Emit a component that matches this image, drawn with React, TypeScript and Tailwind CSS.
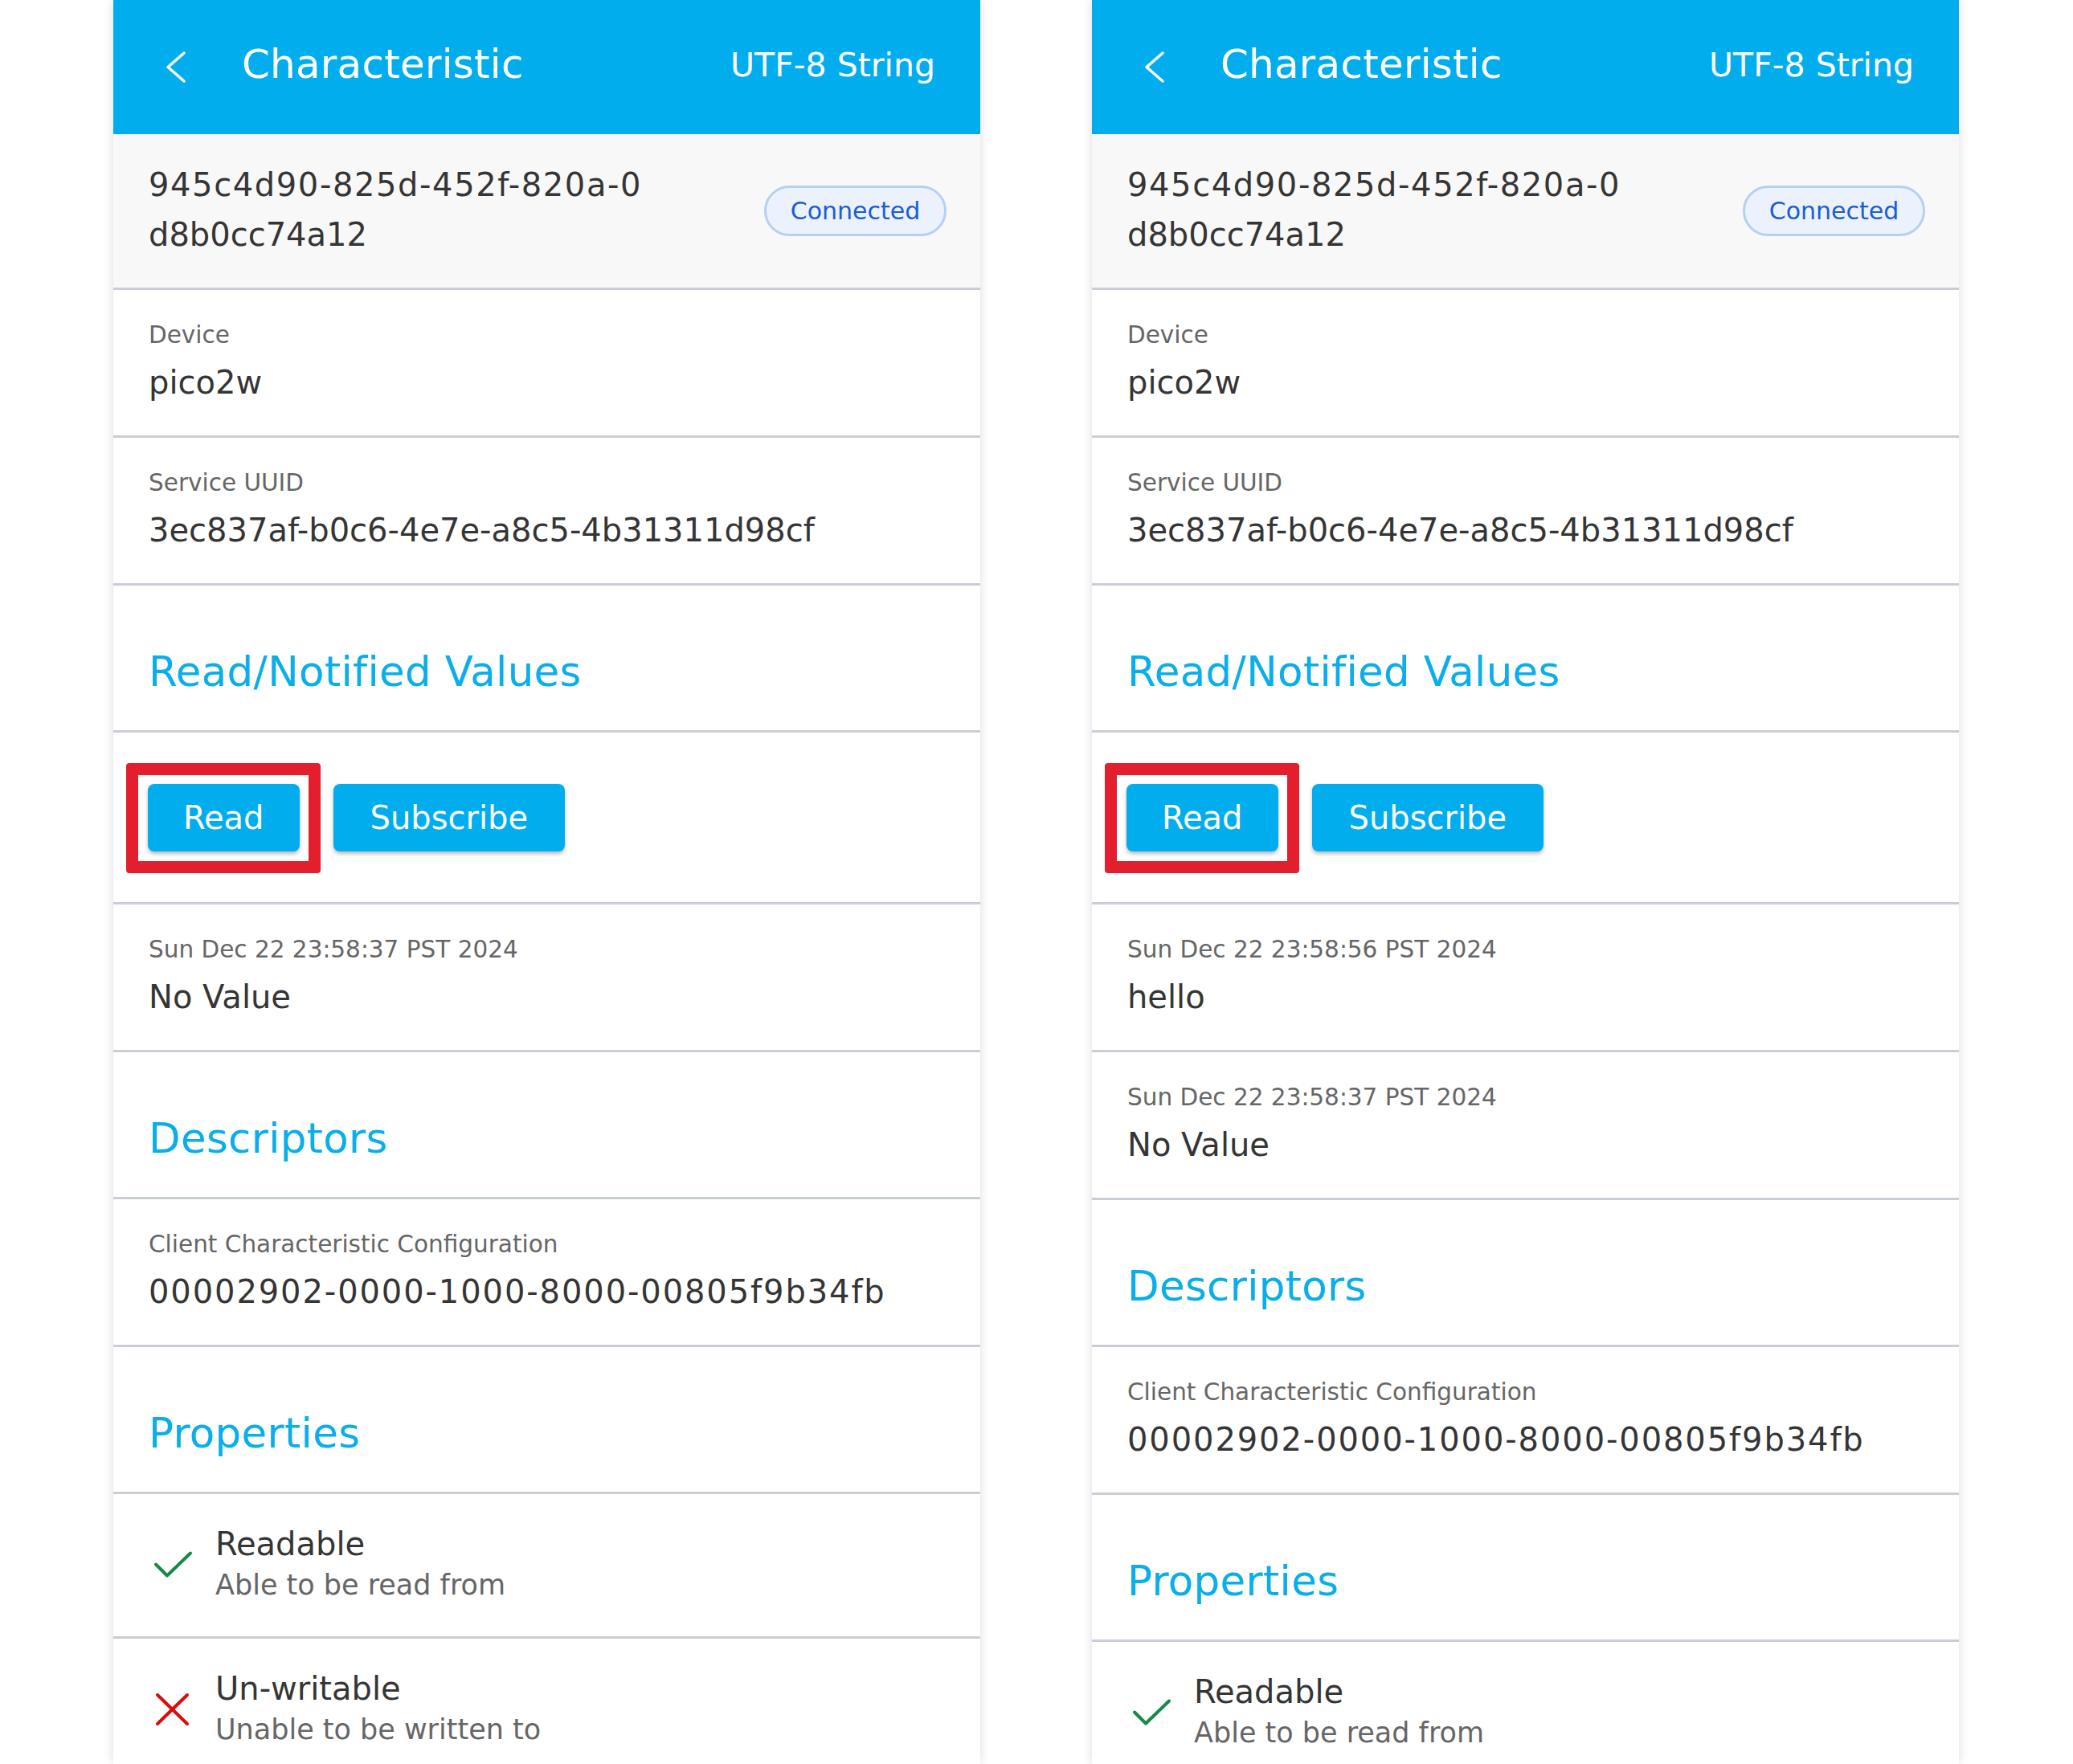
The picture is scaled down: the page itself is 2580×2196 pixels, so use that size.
import React from "react";

const FONT = { fontFamily: '"DejaVu Sans", "Noto Sans", sans-serif' };

function Header() {
  return (
    <div className="flex h-[167px] items-center bg-[#02adee] pl-[66px] pr-[56px] text-white">
      <svg width="24" height="42" viewBox="0 0 24 42" className="shrink-0">
        <polyline points="22,3 2,20.5 22,38" fill="none" stroke="#ffffff" strokeWidth="3.5" strokeLinecap="round" strokeLinejoin="round" />
      </svg>
      <span className="ml-[70px] mb-[8px] text-[50px] leading-[58px] tracking-[0.2px]">Characteristic</span>
      <div className="flex-1" />
      <span className="mb-[5px] text-[41px] leading-[48px]">UTF-8 String</span>
    </div>
  );
}

function IdSection() {
  return (
    <div className="flex h-[191px] items-center justify-between border-b-[3px] border-[#c9ced6] bg-[#f8f8f8] pl-[44px] pr-[42px] box-content">
      <div className="pb-[4px] text-[40px] leading-[62px] text-[#353535]">
        <span className="block tracking-[1.6px]">945c4d90-825d-452f-820a-0</span>
        <span className="block">d8b0cc74a12</span>
      </div>
      <div className="flex h-[63px] w-[227px] items-center justify-center rounded-full border-[3px] border-[#b6cff4] bg-[#ebf2fd] text-[30px] leading-[36px] text-[#1a5dd6]">
        Connected
      </div>
    </div>
  );
}

function Field({ label, value, valueClass = "" }: { label: string; value: string; valueClass?: string }) {
  return (
    <div className="box-content flex h-[181px] flex-col justify-center border-b-[3px] border-[#c9ced6] pl-[44px]">
      <div className="pb-[3px]">
        <div className="text-[29.5px] leading-[36px] text-[#666666]">{label}</div>
        <div className={"mt-[16px] text-[40px] leading-[50px] text-[#353535] " + valueClass}>{value}</div>
      </div>
    </div>
  );
}

function SectionTitle({ title }: { title: string }) {
  return (
    <div className="box-content flex h-[180px] items-end border-b-[3px] border-[#c9ced6] pl-[44px]">
      <div className="mb-[43px] text-[51.5px] leading-[60px] tracking-[0.3px] text-[#0aaeea]">{title}</div>
    </div>
  );
}

function Buttons() {
  return (
    <div className="box-content flex h-[211px] items-center gap-[42px] border-b-[3px] border-[#c9ced6] pl-[43px]">
      <div className="relative">
        <div className="flex h-[84px] items-center justify-center rounded-[8px] bg-[#02adee] px-[44px] text-[40px] leading-[48px] text-white shadow-[0_3px_5px_rgba(0,0,0,0.28)]">
          Read
        </div>
        <div className="pointer-events-none absolute left-[-27px] top-[-26px] h-[137px] w-[242px] rounded-[4px] border-[15px] border-[#e31e2d]" />
      </div>
      <div className="flex h-[84px] items-center justify-center rounded-[8px] bg-[#02adee] px-[46px] text-[40px] leading-[48px] text-white shadow-[0_3px_5px_rgba(0,0,0,0.28)]">
        Subscribe
      </div>
    </div>
  );
}

function Check() {
  return (
    <svg width="50" height="44" viewBox="0 0 50 44" className="shrink-0">
      <polyline points="4,20.5 18,34.5 47,6.5" fill="none" stroke="#148b45" strokeWidth="4" strokeLinecap="round" strokeLinejoin="round" />
    </svg>
  );
}

function Cross() {
  return (
    <svg width="50" height="44" viewBox="0 0 50 44" className="shrink-0">
      <line x1="6" y1="3" x2="43" y2="39" stroke="#dc0a0a" strokeWidth="4" strokeLinecap="round" />
      <line x1="43" y1="3" x2="6" y2="39" stroke="#dc0a0a" strokeWidth="4" strokeLinecap="round" />
    </svg>
  );
}

function Property({ ok, title, sub }: { ok: boolean; title: string; sub: string }) {
  return (
    <div className="box-content flex h-[177px] items-center border-b-[3px] border-[#c9ced6] pl-[49px]">
      {ok ? <Check /> : <Cross />}
      <div className="ml-[28px] pb-[5px]">
        <div className="text-[40px] leading-[50px] text-[#353535]">{title}</div>
        <div className="mt-[4px] text-[35px] leading-[44px] text-[#666666]">{sub}</div>
      </div>
    </div>
  );
}

function Panel({ values }: { values: { ts: string; v: string }[] }) {
  return (
    <div className="h-[2196px] w-[1079px] shrink-0 overflow-hidden bg-white shadow-[0_0_12px_rgba(0,0,0,0.14)]">
      <Header />
      <IdSection />
      <Field label="Device" value="pico2w" />
      <Field label="Service UUID" value="3ec837af-b0c6-4e7e-a8c5-4b31311d98cf" />
      <SectionTitle title="Read/Notified Values" />
      <Buttons />
      {values.map((x, i) => (
        <Field key={i} label={x.ts} value={x.v} />
      ))}
      <SectionTitle title="Descriptors" />
      <Field label="Client Characteristic Configuration" value="00002902-0000-1000-8000-00805f9b34fb" valueClass="tracking-[1.9px]" />
      <SectionTitle title="Properties" />
      <Property ok title="Readable" sub="Able to be read from" />
      <Property ok={false} title="Un-writable" sub="Unable to be written to" />
    </div>
  );
}

export default function App() {
  return (
    <div className="flex h-[2196px] w-[2580px] gap-[139px] overflow-hidden bg-white pl-[141px]" style={FONT}>
      <Panel values={[{ ts: "Sun Dec 22 23:58:37 PST 2024", v: "No Value" }]} />
      <Panel
        values={[
          { ts: "Sun Dec 22 23:58:56 PST 2024", v: "hello" },
          { ts: "Sun Dec 22 23:58:37 PST 2024", v: "No Value" },
        ]}
      />
    </div>
  );
}
